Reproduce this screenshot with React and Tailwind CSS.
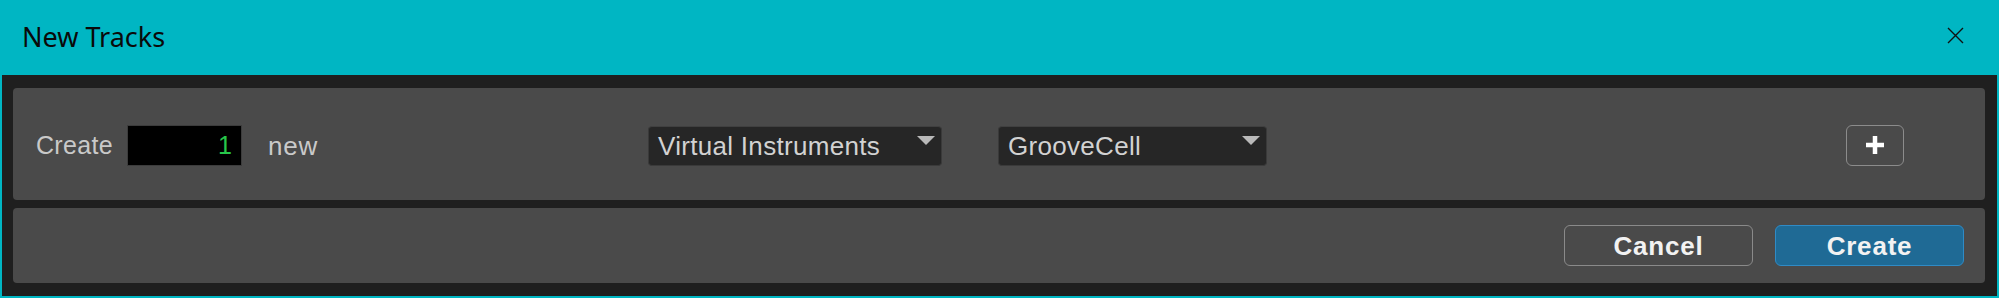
import { useState } from 'react';

const label = "font-['Liberation_Sans',Arial,sans-serif] text-[25px] leading-none text-[#c9c9c9]";

function Dropdown({ value, width }) {
  return (
    <div
      className={`relative flex h-[40px] items-center rounded-[4px] border border-[#3a3a3a] border-t-[#404040] bg-[#262626] pl-[9px] ${width}`}
    >
      <span className="font-['Liberation_Sans',Arial,sans-serif] text-[26px] leading-none tracking-[0.3px] text-[#d2d2d2]">
        {value}
      </span>
      <svg
        className="absolute right-[6px] top-[9px]"
        width="18"
        height="9"
        viewBox="0 0 18 9"
      >
        <polygon points="0,0 18,0 9,9" fill="#b9b9b9" />
      </svg>
    </div>
  );
}

export default function App() {
  const [count] = useState(1);

  return (
    <div className="flex h-[298px] w-[1999px] flex-col bg-[#00b6c3]">
      {/* title bar */}
      <div className="flex h-[75px] shrink-0 items-center justify-between pl-[22px] pr-[35px]">
        <span className="font-['Noto_Sans',sans-serif] text-[27px] leading-none text-[#0a0a0a] -translate-y-[1px]">
          New Tracks
        </span>
        <svg width="17" height="17" viewBox="0 0 17 17" className="-translate-y-[2px]">
          <path d="M1 1 L16 16 M16 1 L1 16" stroke="#111" strokeWidth="1.4" fill="none" />
        </svg>
      </div>

      {/* body */}
      <div className="mx-[2px] mb-[2px] flex flex-1 flex-col gap-[8px] bg-[#1f1f1f] pb-[13px] pl-[11px] pr-[12px] pt-[13px]">
        <div className="flex h-[112px] items-center rounded-[4px] bg-[#4a4a4a] pl-[23px] pt-[3px]">
          <span className={`${label} w-[91px] tracking-[0.3px]`}>Create</span>
          <div className="flex h-[41px] w-[115px] items-center justify-end border border-[#3c3c3c] bg-black pr-[9px]">
            <span className="font-['Liberation_Sans',Arial,sans-serif] text-[25px] leading-none text-[#27c64a]">
              {count}
            </span>
          </div>
          <span className="ml-[26px] w-[380px] font-['Liberation_Sans',Arial,sans-serif] text-[26px] leading-none tracking-[0.8px] text-[#c9c9c9]">
            new
          </span>
          <Dropdown value="Virtual Instruments" width="w-[294px]" />
          <div className="ml-[56px]">
            <Dropdown value="GrooveCell" width="w-[269px]" />
          </div>
          <button className="ml-[579px] flex h-[41px] w-[58px] items-center justify-center rounded-[6px] border-[1.5px] border-[#8c8c8c]">
            <svg width="20" height="20" viewBox="0 0 20 20" className="-translate-y-[1px]">
              <path d="M10 1 V19 M1 10 H19" stroke="#ffffff" strokeWidth="4.5" fill="none" />
            </svg>
          </button>
        </div>

        <div className="flex flex-1 items-center justify-end gap-[22px] rounded-[4px] bg-[#4a4a4a] pr-[21px]">
          <button className="flex h-[41px] w-[189px] items-center justify-center rounded-[6px] border-[1.5px] border-[#8a8a8a] font-['Liberation_Sans',Arial,sans-serif] text-[26px] font-bold leading-none tracking-[0.8px] text-[#f2f2f2]">
            Cancel
          </button>
          <button className="flex h-[41px] w-[189px] items-center justify-center rounded-[6px] border-[1.5px] border-[#2f8bc6] bg-[#1f6a95] font-['Liberation_Sans',Arial,sans-serif] text-[26px] font-bold leading-none tracking-[0.8px] text-[#f2f2f2]">
            Create
          </button>
        </div>
      </div>
    </div>
  );
}
